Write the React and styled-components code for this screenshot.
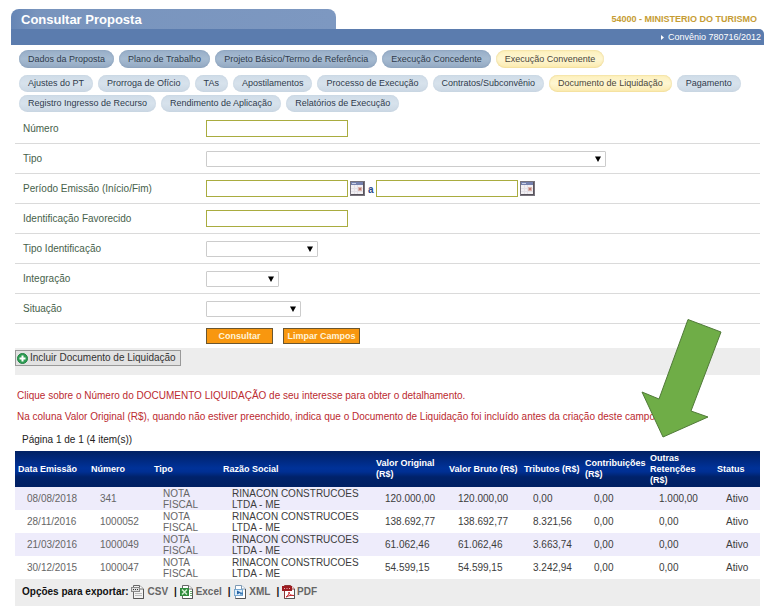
import React from 'react';
import styled, { createGlobalStyle, css } from 'styled-components';

const GlobalStyle = createGlobalStyle`
  *, *::before, *::after { box-sizing: border-box; }
  body {
    margin: 0;
    background: #fff;
    color: #333;
    font-family: "Liberation Sans", Arial, Helvetica, sans-serif;
    font-size: 10px;
    line-height: 12px;
  }
  button, input, select { font: inherit; margin: 0; }
`;

const Page = styled.div`
  padding: 9px 10px 8px 11px;
`;

const Header = styled.header`
  display: flex;
  align-items: center;
  justify-content: space-between;
`;

const TitleTab = styled.h1`
  flex: 0 1 325px;
  height: 20px;
  margin: 0;
  padding: 1px 10px 0;
  border-radius: 8px 8px 0 0;
  background: linear-gradient(90deg, #6585b5, #7894bd 8%, #7d98c1);
  color: #fff;
  font-size: 13px;
  line-height: 20px;
  white-space: nowrap;
`;

const Agency = styled.strong`
  padding-right: 7px;
  color: #c69c34;
  font-size: 9px;
`;

const HeaderBar = styled.div`
  display: flex;
  align-items: center;
  justify-content: flex-end;
  gap: 4px;
  height: 16px;
  padding-right: 3px;
  border-top-right-radius: 5px;
  background: #5b7cae;
  color: #fff;
  font-size: 9px;
`;

const Content = styled.main`
  padding: 0 4px;
`;

const PillRow = styled.nav`
  display: flex;
  flex-wrap: wrap;
  gap: 3px 5px;
  padding: ${p => (p.$main ? '5px 4px 7px' : '0 4px 2px')};
`;

const Pill = styled.a`
  display: block;
  padding: 0 9px;
  border-radius: 9px;
  font-size: 9px;
  line-height: ${p => (p.$main ? '18px' : '17px')};
  white-space: nowrap;
  text-decoration: none;
  color: #2f3b4c;
  ${p => (p.$main
    ? css`background: linear-gradient(#98aec8, #a6bbd1 50%, #92a8c2); box-shadow: inset 0 0 2px #8299b4;`
    : css`background: linear-gradient(#cfdce8, #d7e2ec 50%, #cbd8e4); box-shadow: inset 0 0 2px #c3d0dd;`)}
  ${p => p.$active && css`
    background: linear-gradient(#fdf0bb, #fef6d2 50%, #fbeaae);
    box-shadow: inset 0 0 2px #e3ca7c;
    color: #4b4638;
  `}
`;

const FieldRow = styled.div`
  display: grid;
  grid-template-columns: 183px 1fr;
  align-items: center;
  min-height: 30px;
  padding-left: 8px;
  border-bottom: 1px solid #dadada;
  color: #47614a;
`;

const Controls = styled.div`
  display: flex;
  align-items: center;
`;

const TextInput = styled.input`
  width: 142px;
  height: 17px;
  padding: 0 3px;
  border: 1px solid #a9ac3f;
  border-radius: 0;
  background: #fff;
`;

const SelectBox = styled.span`
  position: relative;
  display: block;
  width: ${p => p.$width}px;
  max-width: 100%;
  svg {
    position: absolute;
    right: 5px;
    top: 5px;
    pointer-events: none;
  }
`;

const Select = styled.select`
  display: block;
  appearance: none;
  width: 100%;
  height: 16px;
  padding: 0 14px 0 3px;
  border: 1px solid #ccc;
  border-radius: 1px;
  background: #fff;
`;

const IconButton = styled.button`
  display: block;
  width: 15px;
  height: 15px;
  margin-left: 2px;
  padding: 0;
  border: 0;
  background: none;
  svg { display: block; }
`;

const Between = styled.strong`
  padding: 3px 2px 0 3px;
  color: #2b4a8c;
`;

const FormActions = styled.div`
  display: flex;
  gap: 10px;
  padding: 4px 0 4px 191px;
`;

const ActionButton = styled.button`
  width: ${p => p.$width}px;
  height: 16px;
  padding: 0;
  border: 1px solid #6a5630;
  border-radius: 0;
  background: #f8970f;
  color: #fff3d8;
  font-size: 9px;
  font-weight: bold;
  white-space: nowrap;
`;

const Toolbar = styled.div`
  height: 27px;
  padding-top: 2px;
  background: #ededed;
`;

const IncludeButton = styled.button`
  display: flex;
  align-items: center;
  gap: 2px;
  height: 16px;
  padding: 0 4px 0 1px;
  border: 1px solid #999;
  border-radius: 0;
  background: #e2e2e2;
  color: #333;
  white-space: nowrap;
`;

const Notices = styled.section`
  position: relative;
  padding: 15px 0 5px 2px;
`;

const Notice = styled.p`
  margin: 0 0 9px;
  color: #bb2a30;
`;

const PageInfo = styled.p`
  margin: 11px 0 0 5px;
  color: #222;
`;

const Pointer = styled.svg`
  position: absolute;
  top: -57px;
  right: 37px;
  pointer-events: none;
`;

const Table = styled.table`
  width: 100%;
  border-collapse: collapse;
  table-layout: fixed;
`;

const Col = styled.col`
  width: ${p => p.$share}%;
`;

const HeadRow = styled.tr`
  height: 36px;
  background: linear-gradient(#012163, #00277a 20%, #003299 48%, #002f92 58%, #00226a 72%, #002063);
`;

const HeadCell = styled.th`
  padding: 0 0 0 3px;
  color: #fff;
  font-size: 9px;
  line-height: 11px;
  text-align: left;
  white-space: pre;
`;

const BodyRow = styled.tr`
  height: 23px;
  &:nth-child(odd) { background: #eeecfb; }
`;

const Cell = styled.td`
  padding: 0 0 0 12px;
  color: ${p => (p.$soft ? '#666' : '#3c3c3c')};
  line-height: 11px;
  white-space: pre;
`;

const ExportBar = styled.footer`
  display: flex;
  align-items: center;
  height: 27px;
  padding: 0 0 2px 7px;
  background: #ededed;
  color: #111;
  font-weight: bold;
  white-space: pre;
`;

const ExportLink = styled.a`
  display: flex;
  align-items: center;
  gap: ${p => p.$gap}px;
  color: #666;
  text-decoration: none;
`;

const Divider = styled.span`
  padding-left: 6px;
`;

const SelectArrow = () => (
  <svg width="6" height="6" viewBox="0 0 6 6" aria-hidden="true">
    <path d="M0 0.5h6L3 6z" fill="#000" />
  </svg>
);

const CalendarIcon = () => (
  <svg width="15" height="15" viewBox="0 0 15 15" aria-hidden="true">
    <rect width="15" height="15" fill="#77737c" />
    <rect x="1" y="1" width="12" height="12" fill="#f2f0f3" />
    <rect x="1" y="1" width="12" height="3" fill="#7480ad" />
    <rect x="2" y="2" width="4" height="1" fill="#c9d0e5" />
    <path d="M4.500 4v9M7.500 4v9M1 7.500h12M1 10.500h12" stroke="#e4e1e8" />
    <rect x="8" y="6" width="4" height="4" fill="#dcb5ae" />
    <rect x="9" y="7" width="2" height="2" fill="#bf7a72" />
    <path d="M13.500 1v13M1 13.500h13" stroke="#58535b" />
  </svg>
);

const PlusIcon = () => (
  <svg width="11" height="11" viewBox="0 0 11 11" aria-hidden="true">
    <circle cx="5.5" cy="5.5" r="5" fill="#2f9e55" stroke="#1f8143" />
    <path d="M5.500 2.500v6M2.500 5.500h6" stroke="#fff" strokeWidth="2" />
  </svg>
);

const Sheet = ({ fill = '#fff', stroke = '#666', children }) => (
  <svg width="13" height="14" viewBox="0 0 13 14" aria-hidden="true">
    <path d="M2.500 0.500h6l4 3.500v9.500h-10z" fill={fill} stroke={stroke} />
    <path d="M8.500 0.500V4h4" fill="#fff" stroke={stroke} />
    <path d="M12.500 4v9.500h-10" fill="none" stroke="#555" />
    {children}
  </svg>
);

const CsvIcon = () => (
  <Sheet fill="#f3f3f3">
    <rect x="0.5" y="2.5" width="8" height="4" fill="#ddd" stroke="#888" />
    <path d="M2 4.500h1M4 4.500h1M6 4.500h1" stroke="#333" />
    <path d="M4 8.500h7M4 10.500h7" stroke="#bbb" />
  </Sheet>
);

const ExcelIcon = () => (
  <Sheet>
    <rect x="0" y="3" width="9" height="8" fill="#2f8b3c" />
    <path d="M2 4.500l5 5M7 4.500l-5 5" stroke="#d5efd4" strokeWidth="1.5" />
    <path d="M10 6.500h2M10 8.500h2M10 10.500h2" stroke="#6bab6d" />
  </Sheet>
);

const XmlIcon = () => (
  <Sheet stroke="#7d99b3">
    <rect x="1.5" y="4.5" width="8" height="6" fill="#dcecf8" stroke="#78a8d0" />
    <path d="M4 5.500l4 2-4 2z" fill="#2765a6" />
    <path d="M7 8.500h3" stroke="#3b79b4" strokeWidth="2" />
  </Sheet>
);

const PdfIcon = () => (
  <Sheet stroke="#8d3535">
    <rect x="0" y="1" width="10" height="5" fill="#9e1b20" />
    <path d="M2 3.500h1M4.500 3.500h1M7 3.500h1" stroke="#e7b7b7" />
    <path d="M4 12c2-1 3-3 3-5 0 2 2 4 5 3.500-3-.5-5 0-8 1.500z" fill="none" stroke="#c2272d" />
  </Sheet>
);

const mainTabs = ['Dados da Proposta', 'Plano de Trabalho', 'Projeto Básico/Termo de Referência', 'Execução Concedente', 'Execução Convenente'];
const subTabs = ['Ajustes do PT', 'Prorroga de Ofício', 'TAs', 'Apostilamentos', 'Processo de Execução', 'Contratos/Subconvênio', 'Documento de Liquidação', 'Pagamento', 'Registro Ingresso de Recurso', 'Rendimento de Aplicação', 'Relatórios de Execução'];

const columns = [
  ['Data Emissão', 73], ['Número', 63], ['Tipo', 69], ['Razão Social', 153],
  ['Valor Original\n(R$)', 73], ['Valor Bruto (R$)', 75], ['Tributos (R$)', 61],
  ['Contribuições\n(R$)', 65], ['Outras\nRetenções\n(R$)', 67], ['Status', 46],
];
const totalShare = columns.reduce((sum, c) => sum + c[1], 0);

const type = 'NOTA\nFISCAL';
const company = 'RINACON CONSTRUCOES\nLTDA - ME';
const rows = [
  ['08/08/2018', '341', type, company, '120.000,00', '120.000,00', '0,00', '0,00', '1.000,00', 'Ativo'],
  ['28/11/2016', '1000052', type, company, '138.692,77', '138.692,77', '8.321,56', '0,00', '0,00', 'Ativo'],
  ['21/03/2016', '1000049', type, company, '61.062,46', '61.062,46', '3.663,74', '0,00', '0,00', 'Ativo'],
  ['30/12/2015', '1000047', type, company, '54.599,15', '54.599,15', '3.242,94', '0,00', '0,00', 'Ativo'],
];

const exportsList = [
  ['CSV', CsvIcon, 3], ['Excel', ExcelIcon, 3], ['XML', XmlIcon, 3], ['PDF', PdfIcon, 2],
];

const TextField = ({ id, label }) => (
  <FieldRow>
    <label htmlFor={id}>{label}</label>
    <Controls><TextInput id={id} type="text" /></Controls>
  </FieldRow>
);

const SelectField = ({ id, label, width }) => (
  <FieldRow>
    <label htmlFor={id}>{label}</label>
    <Controls>
      <SelectBox $width={width}>
        <Select id={id}><option value="" /></Select>
        <SelectArrow />
      </SelectBox>
    </Controls>
  </FieldRow>
);

export default function App() {
  return (
    <Page>
      <GlobalStyle />
      <Header>
        <TitleTab>Consultar Proposta</TitleTab>
        <Agency>54000 - MINISTERIO DO TURISMO</Agency>
      </Header>
      <HeaderBar>
        <svg width="3" height="5" viewBox="0 0 3 5" aria-hidden="true"><path d="M0 0l3 2.500L0 5z" fill="#fff" /></svg>
        <span>Convênio 780716/2012</span>
      </HeaderBar>
      <Content>
        <PillRow $main aria-label="Seções">
          {mainTabs.map(t => (
            <Pill key={t} href="#" $main $active={t === 'Execução Convenente'}>{t}</Pill>
          ))}
        </PillRow>
        <PillRow aria-label="Subseções">
          {subTabs.map(t => (
            <Pill key={t} href="#" $active={t === 'Documento de Liquidação'}>{t}</Pill>
          ))}
        </PillRow>

        <form onSubmit={e => e.preventDefault()}>
          <TextField id="numero" label="Número" />
          <SelectField id="tipo" label="Tipo" width={400} />
          <FieldRow>
            <label htmlFor="inicio">Período Emissão (Início/Fim)</label>
            <Controls>
              <TextInput id="inicio" type="text" />
              <IconButton type="button" aria-label="Escolher data inicial"><CalendarIcon /></IconButton>
              <Between>a</Between>
              <TextInput type="text" aria-label="Fim" />
              <IconButton type="button" aria-label="Escolher data final"><CalendarIcon /></IconButton>
            </Controls>
          </FieldRow>
          <TextField id="favorecido" label="Identificação Favorecido" />
          <SelectField id="tipo-id" label="Tipo Identificação" width={112} />
          <SelectField id="integracao" label="Integração" width={73} />
          <SelectField id="situacao" label="Situação" width={95} />
          <FormActions>
            <ActionButton type="submit" $width={67}>Consultar</ActionButton>
            <ActionButton type="reset" $width={77}>Limpar Campos</ActionButton>
          </FormActions>
        </form>

        <Toolbar>
          <IncludeButton type="button"><PlusIcon />Incluir Documento de Liquidação</IncludeButton>
        </Toolbar>

        <Notices>
          <Notice>Clique sobre o Número do DOCUMENTO LIQUIDAÇÃO de seu interesse para obter o detalhamento.</Notice>
          <Notice>Na coluna Valor Original (R$), quando não estiver preenchido, indica que o Documento de Liquidação foi incluído antes da criação deste campo</Notice>
          <PageInfo>Página 1 de 1 (4 item(s))</PageInfo>
          <Pointer width="82" height="121" viewBox="0 0 82 121" aria-hidden="true">
            <path d="M47 1.500L80 14L50 93L67 99L22 119L1 74L18 81z" fill="#6fad47" stroke="#507a38" />
          </Pointer>
        </Notices>

        <Table>
          <colgroup>
            {columns.map(([name, w]) => <Col key={name} $share={(w / totalShare) * 100} />)}
          </colgroup>
          <thead>
            <HeadRow>
              {columns.map(([name]) => <HeadCell key={name} scope="col">{name}</HeadCell>)}
            </HeadRow>
          </thead>
          <tbody>
            {rows.map(row => (
              <BodyRow key={row[1]}>
                {row.map((value, i) => <Cell key={i} $soft={i < 3}>{value}</Cell>)}
              </BodyRow>
            ))}
          </tbody>
        </Table>
        <ExportBar>
          <span>Opções para exportar: </span>
          {exportsList.map(([name, Icon, gap], i) => (
            <React.Fragment key={name}>
              {i > 0 && <Divider>| </Divider>}
              <ExportLink href="#" $gap={gap}><Icon />{name}</ExportLink>
            </React.Fragment>
          ))}
        </ExportBar>
      </Content>
    </Page>
  );
}
